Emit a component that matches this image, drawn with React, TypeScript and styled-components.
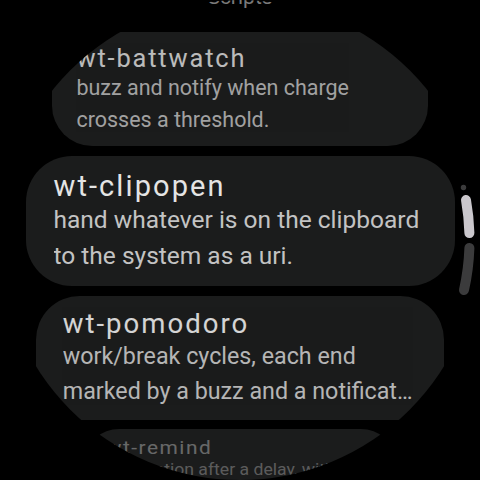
import styled, { createGlobalStyle } from "styled-components";

const GlobalStyle = createGlobalStyle`
  html, body {
    margin: 0;
    padding: 0;
    background: #000000;
  }
  body {
    font-family: Roboto, "Noto Sans", sans-serif;
  }
`;

type Script = {
  name: string;
  lines: string[];
  zoom: number;
  squash?: number;
  fade: number;
};

// lines are pre-wrapped the way the watch wraps them; the last one ellipsizes
const scripts: Script[] = [
  { name: "wt-battwatch", lines: ["buzz and notify when charge", "crosses a threshold."], zoom: 0.877, fade: 0.8 },
  { name: "wt-clipopen", lines: ["hand whatever is on the clipboard", "to the system as a uri."], zoom: 1, fade: 1 },
  { name: "wt-pomodoro", lines: ["work/break cycles, each end", "marked by a buzz and a notification."], zoom: 0.95, fade: 0.92 },
  { name: "wt-remind", lines: ["notification after a delay, with a", "buzz."], zoom: 0.72, squash: 0.9, fade: 0.38 },
];

export default function App() {
  return (
    <>
      <GlobalStyle />
      <Screen>
        <List>
          <Header>Scripts</Header>
          {scripts.map((s) => (
            <Card key={s.name} $zoom={s.zoom} $squash={s.squash ?? 1}>
              <Content $fade={s.fade}>
                <Title>{s.name}</Title>
                {s.lines.map((l) => (
                  <DescLine key={l}>{l}</DescLine>
                ))}
              </Content>
            </Card>
          ))}
        </List>
        <Indicator width="480" height="480" viewBox="0 0 480 480">
          <circle cx="463.5" cy="187.5" r="2.7" fill="#3b3b3c" />
          <path d="M 466 200 A 229.5 229.5 0 0 1 469.4 233" stroke="#cac7cc" strokeWidth="10" strokeLinecap="round" fill="none" />
          <path d="M 469.4 248 A 229.5 229.5 0 0 1 464 290" stroke="#3b3b3c" strokeWidth="10" strokeLinecap="round" fill="none" />
        </Indicator>
      </Screen>
    </>
  );
}

const Screen = styled.div`
  position: relative;
  width: 480px;
  height: 480px;
  border-radius: 50%;
  overflow: hidden;
  background: #000000;
`;

const List = styled.div`
  display: flex;
  flex-direction: column;
  align-items: center;
  gap: 9.5px;
  margin-top: -15.2px;
`;

const Header = styled.div`
  font-size: 21px;
  line-height: 24px;
  color: #7a7a7a;
  margin-bottom: 13.7px;
`;

const Card = styled.div<{ $zoom: number; $squash: number }>`
  zoom: ${(p) => p.$zoom};
  transform: scaleY(${(p) => p.$squash});
  transform-origin: top center;
  flex-shrink: 0;
  width: 429px;
  box-sizing: border-box;
  padding: 14px 28px 12.4px;
  background: #1b1c1c;
  border-radius: 46px;
`;

const Content = styled.div<{ $fade: number }>`
  opacity: ${(p) => p.$fade};
`;

const Title = styled.div`
  font-size: 29px;
  line-height: 32px;
  letter-spacing: 2.1px;
  color: #e4e4e4;
  white-space: nowrap;
`;

const DescLine = styled.div`
  font-size: 24.5px;
  line-height: 36px;
  color: #c3c3c3;
  white-space: nowrap;
  overflow: hidden;
  text-overflow: ellipsis;
`;

const Indicator = styled.svg`
  position: absolute;
  left: 0;
  top: 0;
  pointer-events: none;
`;
